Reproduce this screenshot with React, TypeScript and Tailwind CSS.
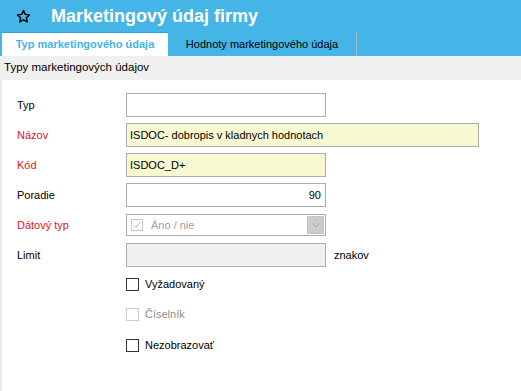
import React from "react";

const font = { fontFamily: '"Liberation Sans", Arial, sans-serif' };

function Label({ children, red }: { children: React.ReactNode; red?: boolean }) {
  return (
    <div className={`w-[109px] shrink-0 text-[11px] ${red ? "text-[#e81123]" : "text-black"}`}>{children}</div>
  );
}

function Check({ label, disabled }: { label: string; disabled?: boolean }) {
  return (
    <div className="flex items-center">
      <div
        className={`w-[13px] h-[13px] border ${disabled ? "border-[#cccccc]" : "border-[#333333]"} bg-white`}
      />
      <span className={`ml-[6px] text-[11px] ${disabled ? "text-[#8d8d8d]" : "text-black"}`}>{label}</span>
    </div>
  );
}

export default function App() {
  return (
    <div className="w-[521px] h-[391px] bg-white flex flex-col overflow-hidden" style={font}>
      <div className="h-[32px] bg-[#45b5e7] flex items-center shrink-0">
        <svg className="ml-[16px]" width="15" height="15" viewBox="0 0 24 24">
          <path
            d="M12 2.5l2.9 6.1 6.6.8-4.9 4.6 1.3 6.6L12 17.3l-5.9 3.3 1.3-6.6-4.9-4.6 6.6-.8z"
            fill="none"
            stroke="#000"
            strokeWidth="2.4"
            strokeLinejoin="round"
          />
        </svg>
        <span className="ml-[20px] text-white font-bold text-[18px] leading-none">Marketingový údaj firmy</span>
      </div>
      <div className="h-[24px] bg-[#45b5e7] flex items-stretch pl-[2px] shrink-0">
        <div className="w-[166px] bg-white border-t border-[#2f9fd4] flex items-center justify-center text-[11px] font-bold text-[#45b5e7]">
          Typ marketingového údaja
        </div>
        <div className="w-[189px] border-r border-[#9dbfd0] flex items-center justify-center text-[11px] text-black">
          Hodnoty marketingového údaja
        </div>
      </div>
      <div className="h-[24px] bg-[#f0f0f0] flex items-center pl-[4px] text-[11.5px] text-black shrink-0">
        Typy marketingových údajov
      </div>
      <div className="flex-1 border-l-2 border-[#ececec] pl-[15px] pt-[13px] flex flex-col">
        <div className="flex flex-col gap-[6px]">
          <div className="flex items-center h-[24px]">
            <Label>Typ</Label>
            <div className="w-[200px] h-[24px] border border-[#adadad] bg-white" />
          </div>
          <div className="flex items-center h-[24px]">
            <Label red>Názov</Label>
            <div className="w-[353px] h-[24px] border border-[#adadad] bg-[#f8f8d2] flex items-center px-[3px] text-[11px] text-black">
              ISDOC- dobropis v kladnych hodnotach
            </div>
          </div>
          <div className="flex items-center h-[24px]">
            <Label red>Kód</Label>
            <div className="w-[200px] h-[24px] border border-[#adadad] bg-[#f8f8d2] flex items-center px-[3px] text-[11px] text-black">
              ISDOC_D+
            </div>
          </div>
          <div className="flex items-center h-[24px]">
            <Label>Poradie</Label>
            <div className="w-[200px] h-[24px] border border-[#adadad] bg-white flex items-center justify-end px-[4px] text-[11px] text-black">
              90
            </div>
          </div>
          <div className="flex items-center h-[24px]">
            <Label red>Dátový typ</Label>
            <div className="w-[200px] h-[22px] border border-[#adadad] bg-white flex items-center pl-[4px] pr-[1px]">
              <svg width="12" height="12" viewBox="0 0 12 12">
                <rect x="0.5" y="0.5" width="11" height="11" fill="#fff" stroke="#c8c8c8" />
                <path d="M2.5 6l2.3 2.4L9.5 3" fill="none" stroke="#b5b5b5" strokeWidth="1" />
              </svg>
              <span className="ml-[8px] text-[11px] text-[#a0a0a0] flex-1">Áno / nie</span>
              <div className="w-[17px] h-[18px] bg-[#cccccc] border border-[#c4c4c4] flex items-center justify-center">
                <svg width="8" height="5" viewBox="0 0 8 5">
                  <path d="M0.5 0.5L4 4l3.5-3.5" fill="none" stroke="#a8a8a8" strokeWidth="1" />
                </svg>
              </div>
            </div>
          </div>
          <div className="flex items-center h-[24px]">
            <Label>Limit</Label>
            <div className="w-[200px] h-[24px] border border-[#adadad] bg-[#f0f0f0]" />
            <span className="ml-[8px] text-[11px] text-black">znakov</span>
          </div>
        </div>
        <div className="mt-[2px] pl-[109px] flex flex-col">
          <div className="h-[30px] flex items-center">
            <Check label="Vyžadovaný" />
          </div>
          <div className="h-[31px] flex items-center">
            <Check label="Číselník" disabled />
          </div>
          <div className="h-[30px] flex items-center">
            <Check label="Nezobrazovať" />
          </div>
        </div>
      </div>
    </div>
  );
}
